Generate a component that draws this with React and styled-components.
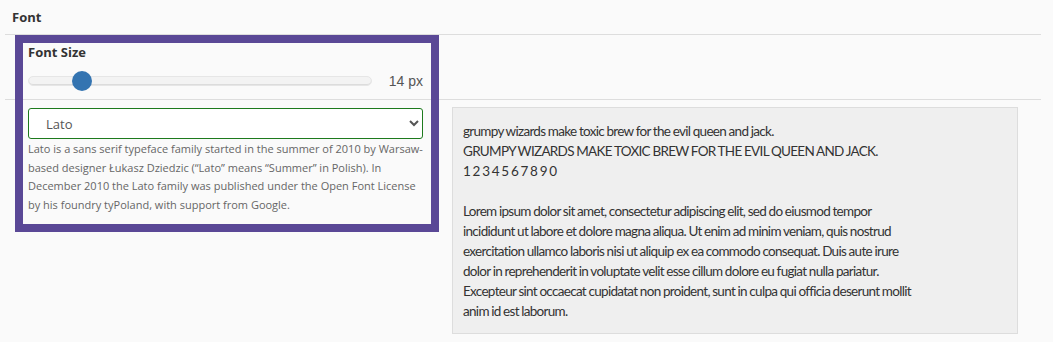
import React, { useState } from "react";
import styled, { createGlobalStyle } from "styled-components";

const GlobalStyle = createGlobalStyle`
  html, body {
    margin: 0;
    padding: 0;
    background: #fafafa;
  }
  * {
    box-sizing: border-box;
  }
`;

const Section = styled.div`
  width: 1036px;
  margin-left: 5px;
  font-family: "Open Sans", sans-serif;
`;

const Heading = styled.div`
  height: 35px;
  padding: 8px 7px 0;
  font-size: 13px;
  font-weight: 700;
  line-height: 18px;
  color: #333;
  border-bottom: 1px solid #dddddd;
`;

const Body = styled.div`
  position: relative;
`;

const SizeRow = styled.div`
  height: 65px;
  padding: 8px 0 0 23px;
  border-bottom: 1px solid #dddddd;
`;

const Label = styled.div`
  font-size: 13px;
  font-weight: 700;
  line-height: 18px;
  color: #333;
`;

const SliderLine = styled.div`
  display: flex;
  align-items: center;
  width: 395px;
  height: 24px;
  margin-top: 8px;
  gap: 17px;
`;

const Range = styled.input`
  -webkit-appearance: none;
  appearance: none;
  width: 345px;
  height: 10px;
  margin: 0;
  border-radius: 5px;
  background: #f3f3f3;
  border: 1px solid #e6e6e6;
  box-shadow: inset 0 -1px 0 #dcdcdc;
  outline: none;

  &::-webkit-slider-thumb {
    -webkit-appearance: none;
    width: 20px;
    height: 20px;
    border-radius: 50%;
    background: #3474b1;
    border: none;
    cursor: pointer;
  }
`;

const Value = styled.span`
  font-family: "Liberation Sans", Arial, sans-serif;
  font-size: 14px;
  color: #555;
  white-space: nowrap;
`;

const FontRow = styled.div`
  display: flex;
  align-items: flex-start;
`;

const Picker = styled.div`
  width: 395px;
  margin-left: 23px;
  padding-top: 8px;
`;

const Select = styled.select`
  width: 100%;
  height: 31px;
  padding: 0 10px 0 13px;
  font-family: "Open Sans", sans-serif;
  font-size: 13px;
  color: #555;
  background: #fff;
  border: 1px solid #1d7a1d;
  border-radius: 3px;
  outline: none;
`;

const Description = styled.p`
  margin: 1px 0 0;
  font-size: 11px;
  line-height: 18.5px;
  color: #666;
`;

const Preview = styled.div`
  width: 566px;
  margin: 7px 0 0 29px;
  padding: 13px 10px 12px;
  background: #efefef;
  border: 1px solid #dddddd;
  font-family: Lato, sans-serif;
  font-size: 13.5px;
  letter-spacing: -0.7px;
  word-spacing: -0.3px;
  line-height: 20px;
  color: #333;
`;

const PreviewText = styled.p`
  max-width: 456px;
  margin: 0;
  & + & {
    margin-top: 20px;
  }
`;

const Highlight = styled.div`
  position: absolute;
  left: 10px;
  top: 0;
  width: 424px;
  height: 197px;
  border: 8px solid #5a4896;
  pointer-events: none;
`;

export default function App() {
  const [size, setSize] = useState(14);

  return (
    <>
      <GlobalStyle />
      <Section>
        <Heading>Font</Heading>
        <Body>
          <SizeRow>
            <Label>Font Size</Label>
            <SliderLine>
              <Range
                type="range"
                min={8}
                max={53}
                step={0.5}
                value={size}
                onChange={(e) => setSize(Number(e.target.value))}
              />
              <Value>{size} px</Value>
            </SliderLine>
          </SizeRow>
          <FontRow>
            <Picker>
              <Select defaultValue="Lato">
                <option>Lato</option>
                <option>Open Sans</option>
                <option>Roboto</option>
                <option>Inter</option>
              </Select>
              <Description>
                Lato is a sans serif typeface family started in the summer of
                2010 by Warsaw-based designer Łukasz Dziedzic (“Lato” means
                “Summer” in Polish). In December 2010 the Lato family was
                published under the Open Font License by his foundry tyPoland,
                with support from Google.
              </Description>
            </Picker>
            <Preview>
              <PreviewText>
                grumpy wizards make toxic brew for the evil queen and jack.
                <br />
                GRUMPY WIZARDS MAKE TOXIC BREW FOR THE EVIL QUEEN AND JACK.
                <br />
                1 2 3 4 5 6 7 8 9 0
              </PreviewText>
              <PreviewText>
                Lorem ipsum dolor sit amet, consectetur adipiscing elit, sed do
                eiusmod tempor incididunt ut labore et dolore magna aliqua. Ut
                enim ad minim veniam, quis nostrud exercitation ullamco laboris
                nisi ut aliquip ex ea commodo consequat. Duis aute irure dolor in
                reprehenderit in voluptate velit esse cillum dolore eu fugiat
                nulla pariatur. Excepteur sint occaecat cupidatat non proident,
                sunt in culpa qui officia deserunt mollit anim id est laborum.
              </PreviewText>
            </Preview>
          </FontRow>
          <Highlight />
        </Body>
      </Section>
    </>
  );
}
